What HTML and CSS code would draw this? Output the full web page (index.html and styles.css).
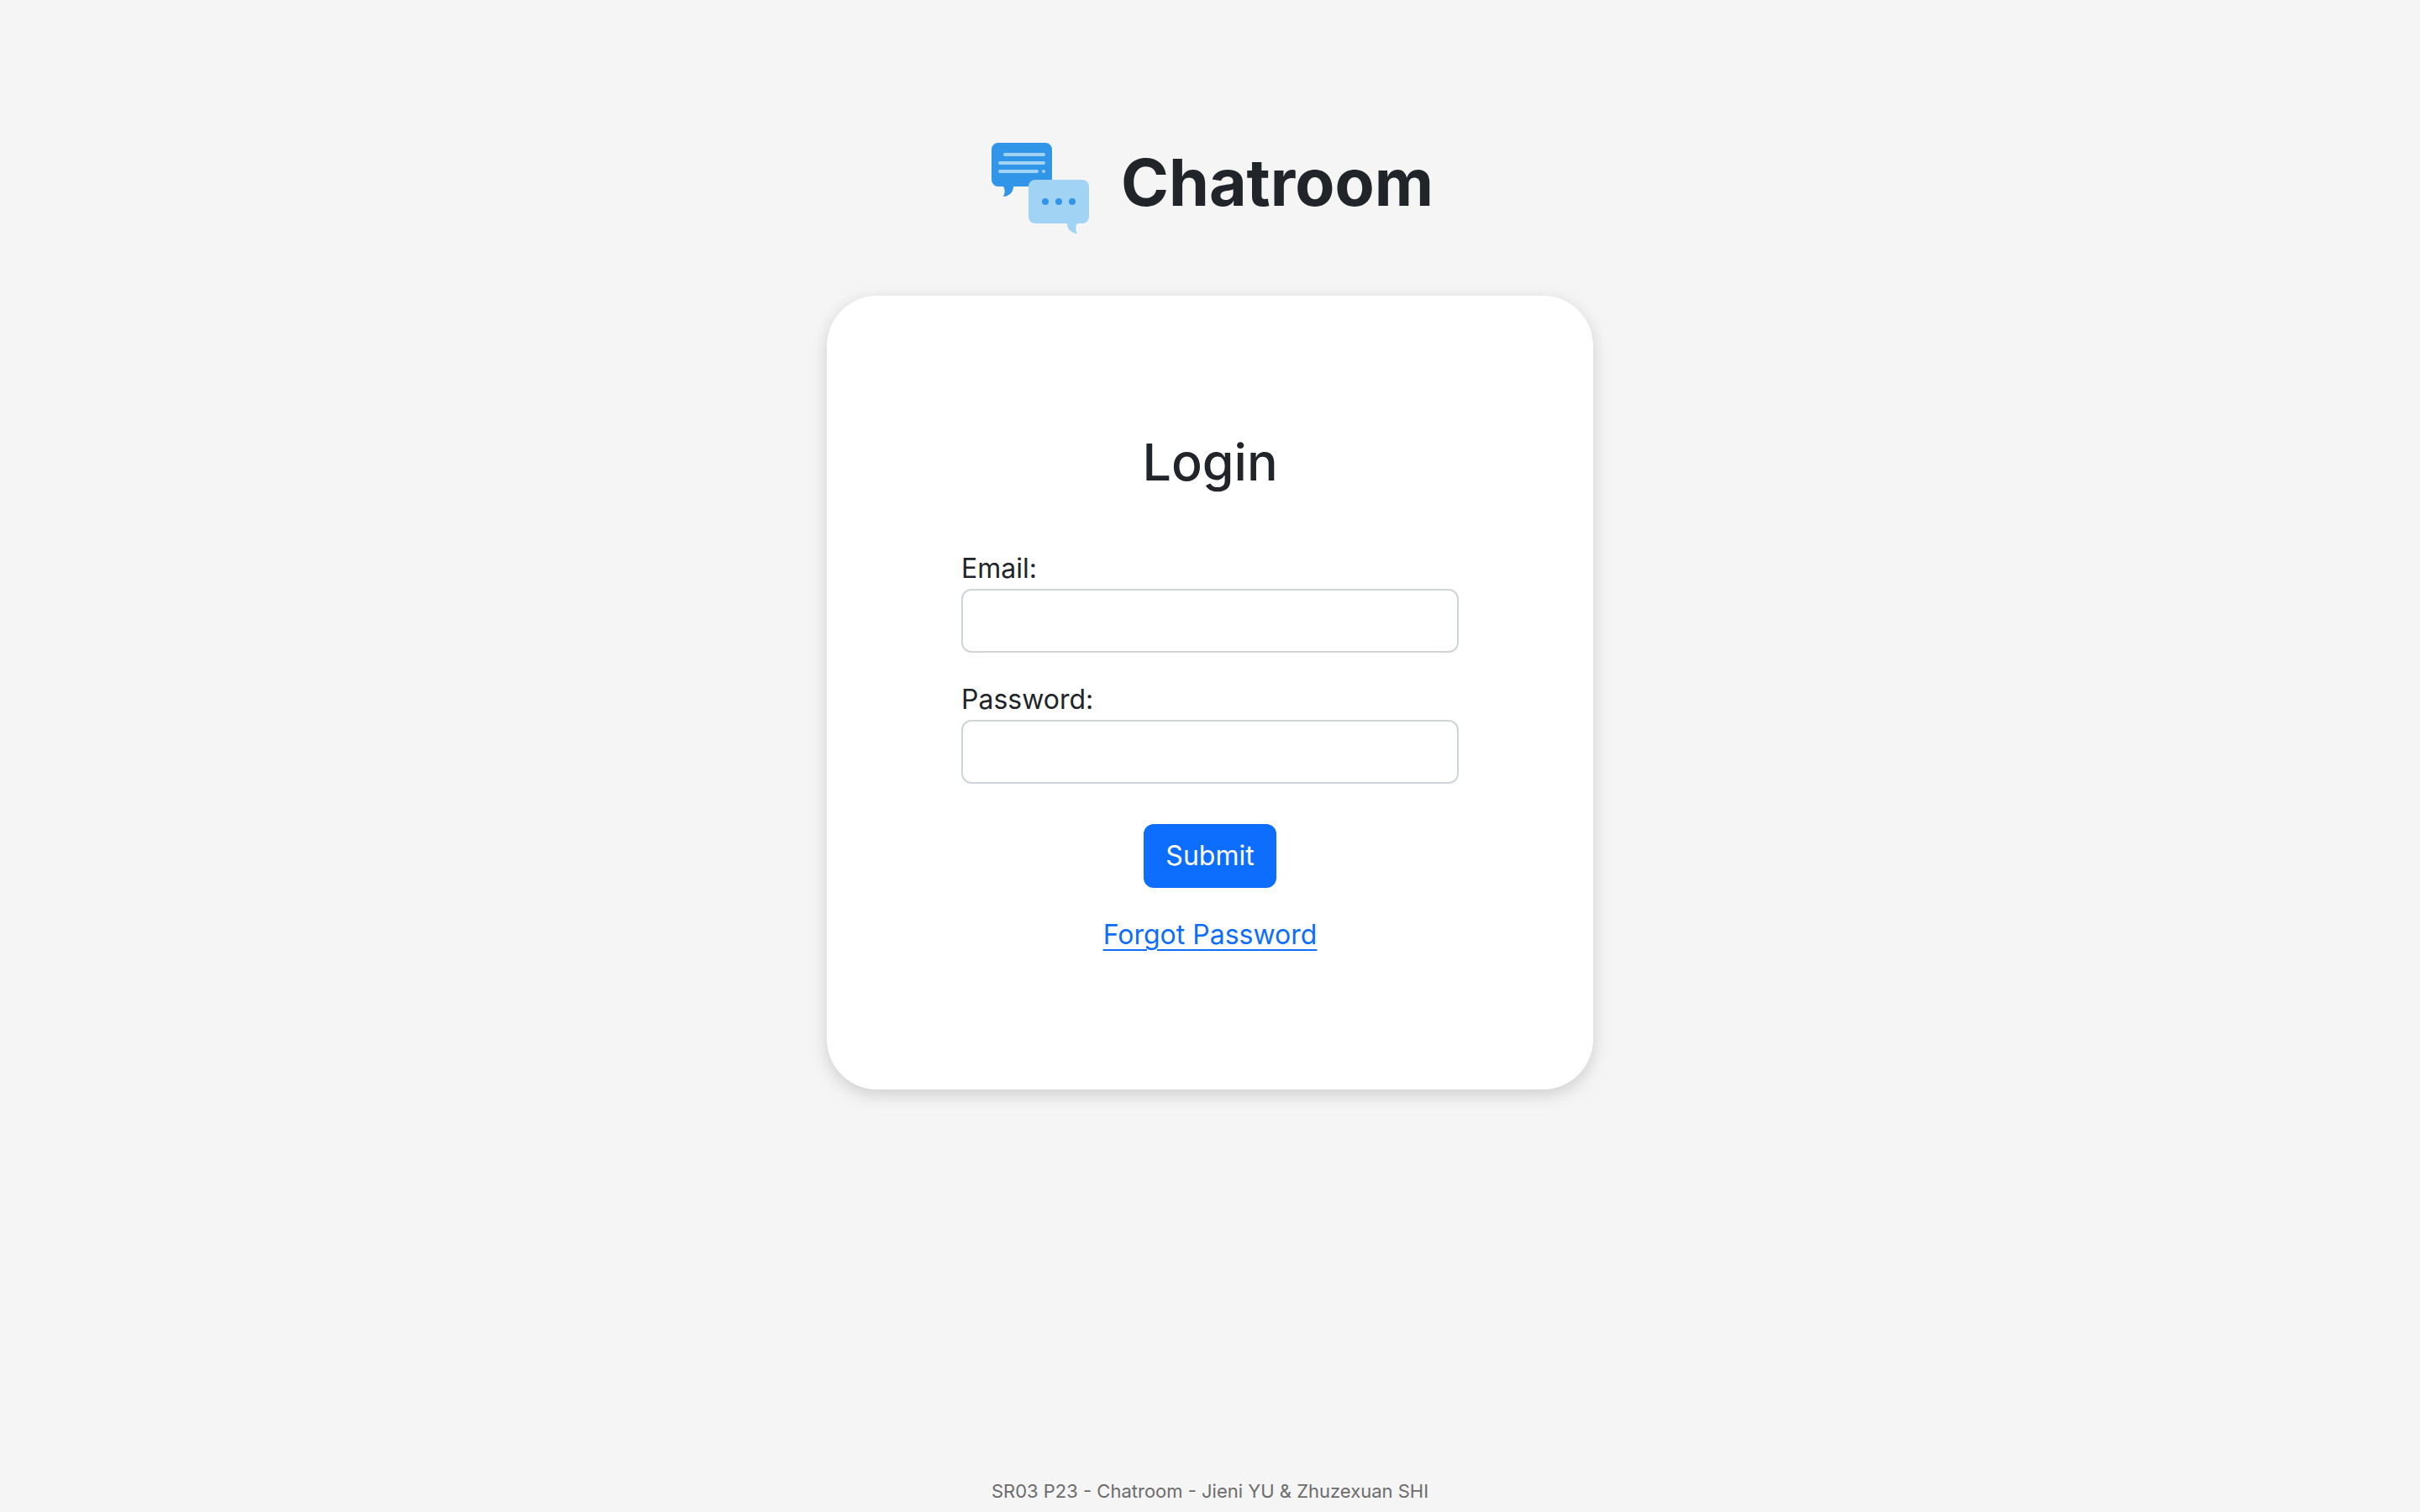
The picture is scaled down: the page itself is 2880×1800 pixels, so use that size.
FILE: index.html
```html
<!DOCTYPE html>
<html lang="en">
<head>
  <meta charset="utf-8">
  <meta name="viewport" content="width=device-width, initial-scale=1">
  <title>Chatroom - Login</title>
  <link rel="stylesheet" href="styles.css">
</head>
<body>
  <header class="brand">
    <svg class="brand-logo" viewBox="0 0 128 128" aria-hidden="true">
      <path fill="#3296e8" d="M14 10h56a8 8 0 0 1 8 8v44H32c0 7-5 11.500-12 12 2-4 2.500-8 0-12h-6a8 8 0 0 1-8-8V18a8 8 0 0 1 8-8z"/>
      <path fill="none" stroke="#a1d3f5" stroke-width="4" stroke-linecap="round" d="M22 24h46M16 34h52M16 44h44M68 44h0"/>
      <path fill="#a1d3f5" d="M58 54h56a8 8 0 0 1 8 8v36a8 8 0 0 1-8 8h-6c-2.500 4-2 8 0 12-7-.5-12-5-12-12H58a8 8 0 0 1-8-8V62a8 8 0 0 1 8-8z"/>
      <g fill="#3296e8">
        <circle cx="70" cy="80" r="4"/>
        <circle cx="86" cy="80" r="4"/>
        <circle cx="102" cy="80" r="4"/>
      </g>
    </svg>
    <h1 class="brand-name">Chatroom</h1>
  </header>

  <main class="card">
    <h2 class="card-title">Login</h2>
    <form class="form">
      <div class="field">
        <label for="email">Email:</label>
        <input class="input" type="email" id="email" name="email">
      </div>
      <div class="field">
        <label for="password">Password:</label>
        <input class="input" type="password" id="password" name="password">
      </div>
      <button class="button" type="submit">Submit</button>
    </form>
    <a class="link" href="#">Forgot Password</a>
  </main>

  <footer class="footer">SR03 P23 - Chatroom - Jieni YU &amp; Zhuzexuan SHI</footer>
</body>
</html>
```
FILE: styles.css
```css
* {
  box-sizing: border-box;
}

body {
  display: flex;
  flex-direction: column;
  align-items: center;
  min-height: 100vh;
  margin: 0;
  padding-top: 160px;
  background: #f5f5f5;
  color: #212529;
  font-family: Inter, "Liberation Sans", sans-serif;
  font-size: 32px;
  line-height: 48px;
}

.brand {
  display: flex;
  align-items: flex-start;
  gap: 32px;
  margin-bottom: 64px;
}

.brand-logo {
  width: 128px;
  height: 128px;
}

.brand-name {
  margin: 0;
  font-size: 77px;
  font-weight: 700;
  line-height: 114px;
}

.card {
  display: flex;
  flex-direction: column;
  align-items: center;
  width: 912px;
  max-width: 100%;
  padding: 160px;
  border-radius: 60px;
  background: #fff;
  box-shadow: 0 6px 20px rgba(0, 0, 0, 0.16);
}

.card-title {
  margin: 0 0 64px;
  font-size: 61px;
  font-weight: 500;
  line-height: 77px;
}

.form {
  display: flex;
  flex-direction: column;
  gap: 32px;
  width: 100%;
  margin-bottom: 32px;
}

.field {
  display: flex;
  flex-direction: column;
}

.input {
  width: 100%;
  height: 76px;
  padding: 12px 24px;
  border: 2px solid #ced4da;
  border-radius: 12px;
  background: #fff;
  color: inherit;
  font: inherit;
}

.button {
  align-self: center;
  margin-top: 16px;
  padding: 14px 26px;
  border: 0;
  border-radius: 12px;
  background: #0d6efd;
  color: #fff;
  font: inherit;
}

.link {
  color: #0d6efd;
  text-decoration-thickness: 2px;
  text-underline-offset: 6px;
}

.footer {
  margin-top: auto;
  padding-bottom: 8px;
  color: #6c6c6c;
  font-size: 22px;
  line-height: 33px;
}
```
